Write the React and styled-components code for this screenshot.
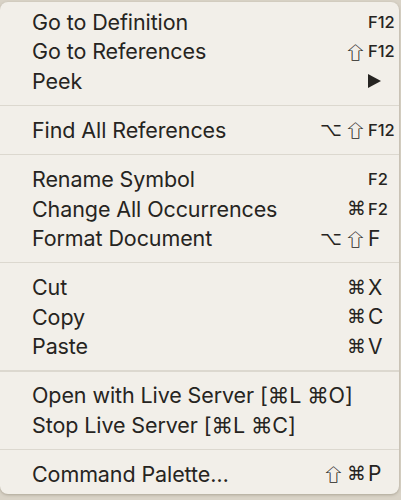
import React from 'react';
import styled, { createGlobalStyle } from 'styled-components';

const GlobalStyle = createGlobalStyle`
  html, body {
    margin: 0;
    padding: 0;
    background: #d9d3c7;
  }
  body {
    font-family: Inter, "Noto Sans", "Liberation Sans", sans-serif;
    -webkit-font-smoothing: antialiased;
  }
`;

const groups = [
  [
    { label: 'Go to Definition', key: 'F12', small: true },
    { label: 'Go to References', mods: '⇧', key: 'F12', small: true },
    { label: 'Peek', submenu: true },
  ],
  [{ label: 'Find All References', mods: '⌥⇧', key: 'F12', small: true }],
  [
    { label: 'Rename Symbol', key: 'F2', small: true },
    { label: 'Change All Occurrences', mods: '⌘', key: 'F2', small: true },
    { label: 'Format Document', mods: '⌥⇧', key: 'F' },
  ],
  [
    { label: 'Cut', mods: '⌘', key: 'X' },
    { label: 'Copy', mods: '⌘', key: 'C' },
    { label: 'Paste', mods: '⌘', key: 'V' },
  ],
  [
    { label: 'Open with Live Server [⌘L ⌘O]' },
    { label: 'Stop Live Server [⌘L ⌘C]' },
  ],
  [{ label: 'Command Palette…', mods: '⇧⌘', key: 'P' }],
];

const Page = styled.div`
  padding-top: 2px;
  height: 500px;
  box-sizing: border-box;
  overflow: hidden;
`;

const Menu = styled.div`
  width: 399px;
  box-sizing: border-box;
  padding: 5px 0;
  background: #f2efe9;
  border-radius: 8px;
  box-shadow: 0 1px 3px rgba(90, 80, 60, 0.35);
  color: #262421;
`;

const Row = styled.div`
  display: flex;
  align-items: center;
  height: 29.6px;
  padding-left: 32px;
`;

const Label = styled.span`
  flex: 1;
  font-size: 21.5px;
  letter-spacing: -0.1px;
  white-space: nowrap;
`;

const Mods = styled.span`
  display: flex;
  align-items: center;
  gap: 3px;
  padding-right: 2px;
`;

const Glyph = styled.span`
  display: inline-block;
  font-family: "DejaVu Sans", sans-serif;
  font-size: 19px;
  line-height: 1;
`;

/* the CJK shift arrow is the right outline shape but narrow, so widen it */
const Shift = styled(Glyph)`
  font-family: "Noto Sans CJK JP", "DejaVu Sans", sans-serif;
  font-size: 17px;
  margin: 0 2px;
  transform: scaleX(1.35);
`;

const Key = styled.span`
  width: 31px;
  font-size: ${(p) => (p.$small ? '16.5px' : '21px')};
  font-weight: ${(p) => (p.$small ? 500 : 400)};
`;

const Arrow = styled.span`
  display: inline-block;
  width: 0;
  height: 0;
  border-top: 7px solid transparent;
  border-bottom: 7px solid transparent;
  border-left: 13px solid #262421;
`;

const Separator = styled.div`
  height: 19.4px;
  display: flex;
  align-items: center;

  &::after {
    content: '';
    flex: 1;
    height: 1.5px;
    background: #dcd8cf;
  }
`;

const Item = ({ item }) => (
  <Row>
    <Label>{item.label}</Label>
    {item.mods && (
      <Mods>
        {[...item.mods].map((m) =>
          m === '⇧' ? <Shift key={m}>{m}</Shift> : <Glyph key={m}>{m}</Glyph>
        )}
      </Mods>
    )}
    {(item.key || item.submenu) && (
      <Key $small={item.small}>{item.submenu ? <Arrow /> : item.key}</Key>
    )}
  </Row>
);

export default function App() {
  return (
    <>
      <GlobalStyle />
      <Page>
        <Menu>
          {groups.map((group, i) => (
            <React.Fragment key={i}>
              {i > 0 && <Separator />}
              {group.map((item) => (
                <Item key={item.label} item={item} />
              ))}
            </React.Fragment>
          ))}
        </Menu>
      </Page>
    </>
  );
}
